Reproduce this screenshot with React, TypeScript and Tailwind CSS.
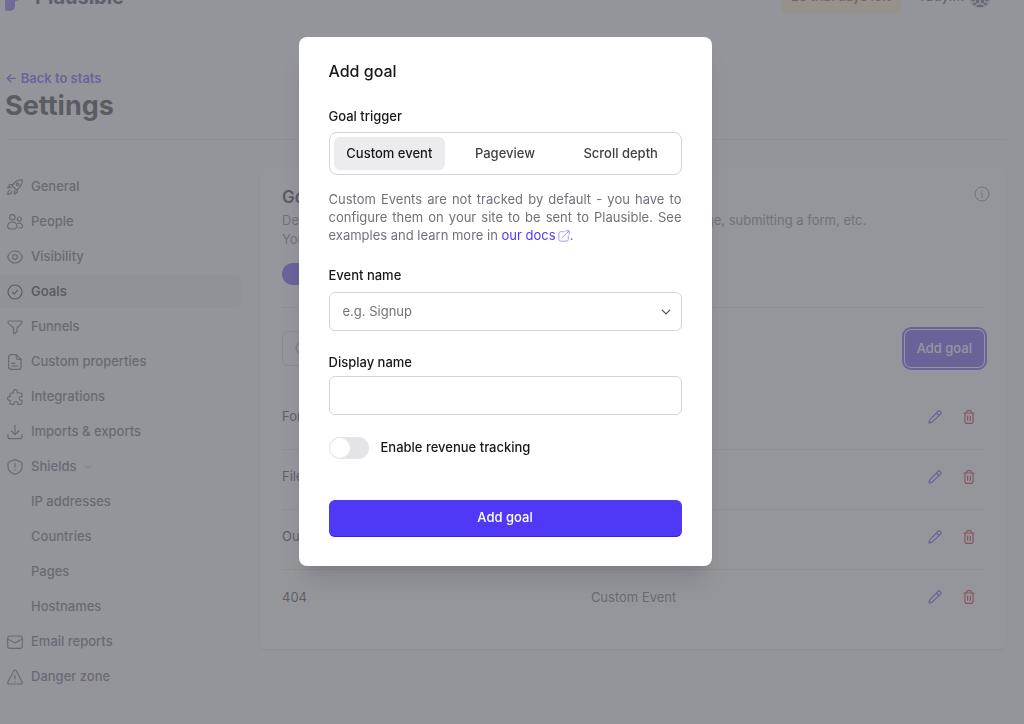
import { useState } from "react";
import type { ReactNode } from "react";

type IconName =
  | "rocket"
  | "users"
  | "eye"
  | "check"
  | "funnel"
  | "document"
  | "puzzle"
  | "download"
  | "shield"
  | "mail"
  | "warning";

const ICONS: Record<IconName, ReactNode> = {
  rocket: (
    <>
      <path d="M46 2C33 2 23 8 15 20l13 13C40 25 46 15 46 2Z" />
      <circle cx="32" cy="16" r="4" />
      <path d="M17 17 9 17 2 26l11-1M31 31v8l-9 7 1-11M10 33c-6 1-7 6-8 13 7-1 12-2 13-8" />
    </>
  ),
  users: (
    <>
      <circle cx="16" cy="10" r="8" />
      <path d="M2 38c0-9 6-14 14-14s14 5 14 14c0 4-7 7-14 7S2 42 2 38Z" />
      <circle cx="37" cy="15" r="6" />
      <path d="M33 28c8-2 14 3 14 11 0 2-4 3-11 3" />
    </>
  ),
  eye: (
    <>
      <path d="M2 24C6 12 15 6 24 6s18 6 22 18c-4 12-13 18-22 18S6 36 2 24Z" />
      <circle cx="24" cy="24" r="7" />
    </>
  ),
  check: (
    <>
      <circle cx="24" cy="24" r="21" />
      <path d="m17 25 5 5 9-11" />
    </>
  ),
  funnel: (
    <path d="M7 6h34c4 0 5 4 3 7L30 27v11l-10 7V27L4 13C2 10 3 6 7 6Z" />
  ),
  document: (
    <>
      <path d="M28 2H12c-4 0-7 3-7 7v30c0 4 3 7 7 7h23c4 0 7-3 7-7V16L28 2Z" />
      <path d="M28 2v9c0 3 2 5 5 5h9M14 28h10M14 36h18" />
    </>
  ),
  puzzle: (
    <path d="M13 12h6V8a6 6 0 0 1 12 0v4h9c3 0 5 2 5 4v7h-3a5 5 0 0 0 0 11h3v8c0 3-2 4-5 4h-8v-3a5 5 0 0 0-11 0v3h-8c-3 0-4-2-4-4v-8H7a5 5 0 0 1 0-11h2v-7c0-3 1-4 4-4Z" />
  ),
  download: (
    <>
      <path d="M24 4v27M13 21l11 11 11-11" />
      <path d="M3 32v6c0 4 2 6 6 6h30c4 0 6-2 6-6v-6" />
    </>
  ),
  shield: (
    <>
      <path d="m24 2 18 7c2 1 3 2 3 4v11c0 11-9 18-21 22C12 42 3 35 3 24V13c0-2 1-3 3-4l18-7Z" />
      <path d="M24 14v11M24 32v1" />
    </>
  ),
  mail: (
    <>
      <rect x="2" y="6" width="44" height="37" rx="7" />
      <path d="m2 15 18 10c3 1 5 1 8 0l18-10" />
    </>
  ),
  warning: (
    <>
      <path d="m20 6L3 38c-2 4 0 7 4 7h34c4 0 6-3 4-7L28 6c-2-4-6-4-8 0Z" />
      <path d="M24 19v11M24 37v1" />
    </>
  ),
};

function NavIcon({ name }: { name: IconName }) {
  return (
    <svg
      viewBox="0 0 48 48"
      className="size-4 shrink-0"
      fill="none"
      stroke="currentColor"
      strokeWidth="3.5"
      strokeLinecap="round"
      strokeLinejoin="round"
      aria-hidden="true"
    >
      {ICONS[name]}
    </svg>
  );
}

function Chevron({ className }: { className: string }) {
  return (
    <svg viewBox="0 0 8 8" className={className} fill="none" stroke="currentColor" aria-hidden="true">
      <path d="m1 2.5 3 3 3-3" strokeLinecap="round" strokeLinejoin="round" />
    </svg>
  );
}

interface NavItem {
  label: string;
  icon?: IconName;
  expandable?: boolean;
}

const NAV: NavItem[] = [
  { label: "General", icon: "rocket" },
  { label: "People", icon: "users" },
  { label: "Visibility", icon: "eye" },
  { label: "Goals", icon: "check" },
  { label: "Funnels", icon: "funnel" },
  { label: "Custom properties", icon: "document" },
  { label: "Integrations", icon: "puzzle" },
  { label: "Imports & exports", icon: "download" },
  { label: "Shields", icon: "shield", expandable: true },
  { label: "IP addresses" },
  { label: "Countries" },
  { label: "Pages" },
  { label: "Hostnames" },
  { label: "Email reports", icon: "mail" },
  { label: "Danger zone", icon: "warning" },
];

const GOALS = ["Form submissions", "File downloads", "Outbound links", "404"];

const TRIGGERS = ["Custom event", "Pageview", "Scroll depth"];

function Header() {
  return (
    <header className="-mt-5 flex h-[34px] items-center justify-between pr-3.5">
      <div className="flex items-center gap-3 text-[20px] font-bold text-slate-800">
        <svg viewBox="0 0 18 28" className="h-7 w-[18px]" aria-hidden="true">
          <defs>
            <linearGradient id="logo" x1="0" y1="0" x2="1" y2="1">
              <stop offset="0" stopColor="#818cf8" />
              <stop offset="1" stopColor="#4f39f6" />
            </linearGradient>
          </defs>
          <path d="M2 0h8a8 9 0 0 1 0 18v5a5 5 0 0 1-5 5H2a2 2 0 0 1-2-2V2a2 2 0 0 1 2-2Z" fill="url(#logo)" />
        </svg>
        Plausible
      </div>
      <div className="flex h-full items-center text-[13px] font-medium">
        <span className="flex h-full items-center rounded-md bg-amber-100 px-2.5 text-yellow-800">
          28 trial days left
        </span>
        <span className="ml-5 text-zinc-700">rudy.m</span>
        <svg viewBox="0 0 24 24" className="ml-1 size-6 text-slate-600" aria-hidden="true">
          <circle cx="12" cy="12" r="11" fill="currentColor" opacity=".25" />
          <path
            d="M5 5h4v4H5zM15 5h4v4h-4zM10 9h4v4h-4zM3 13h4v3H3zM17 13h4v3h-4zM8 15h3v3H8zM13 15h3v3h-3zM5 18h3v2H5zM16 18h3v2h-3zM9 20h6v2H9z"
            fill="currentColor"
          />
        </svg>
      </div>
    </header>
  );
}

function Sidebar() {
  return (
    <nav className="-ml-3 flex w-[249px] shrink-0 flex-col gap-0.5 pt-px text-[13px] font-medium text-zinc-600">
      {NAV.map((item) => (
        <a
          key={item.label}
          href="#"
          className={
            item.label === "Goals"
              ? "flex h-[33px] items-center gap-2 rounded-md bg-zinc-200/60 pl-3.5 font-semibold text-zinc-900"
              : "flex h-[33px] items-center gap-2 rounded-md pl-3.5"
          }
        >
          {item.icon ? <NavIcon name={item.icon} /> : <span className="w-4" />}
          {item.label}
          {item.expandable && <Chevron className="size-2 text-zinc-400" />}
        </a>
      ))}
    </nav>
  );
}

function GoalsCard() {
  return (
    <section className="h-[480px] min-w-0 flex-1 rounded-md bg-white px-[22px] shadow-sm">
      <div className="border-b border-zinc-200 pt-4 pb-[22px]">
        <div className="flex items-center justify-between">
          <h2 className="text-[17px] leading-6 font-semibold text-zinc-900">Goals</h2>
          <button type="button" aria-label="Help" className="-mt-1.5 -mr-1.5 text-zinc-500">
            <svg viewBox="0 0 16 16" className="size-4" fill="none" stroke="currentColor" aria-hidden="true">
              <circle cx="8" cy="8" r="7" />
              <path d="M7 7h1v4.5M8 4.5v.5" strokeLinecap="round" />
            </svg>
          </button>
        </div>
        <p className="mt-0.5 text-[13px] leading-[19px] text-zinc-500">
          Define actions you want your visitors to take, like visiting a certain page, submitting a form, etc.
          <br />
          You can also compose goals.
        </p>
        <button type="button" aria-label="Show goals" className="mt-3.5 block h-[22px] w-10 rounded-full bg-[#4f39f6]" />
      </div>
      <div className="mt-[22px] flex items-center justify-between">
        <div className="flex h-[35px] w-56 items-center gap-2 rounded-md border border-zinc-300 px-3 text-zinc-500">
          <svg viewBox="0 0 14 14" className="size-3.5" fill="none" stroke="currentColor" aria-hidden="true">
            <circle cx="6" cy="6" r="5" />
            <path d="m10 10 3 3" />
          </svg>
          <input aria-label="Search goals" className="min-w-0 flex-1 outline-none" />
        </div>
        <button
          type="button"
          className="h-[37px] rounded-md bg-[#4f39f6] px-3 text-[13px] font-medium text-white ring-2 ring-[#4f39f6] ring-offset-1"
        >
          Add goal
        </button>
      </div>
      <table className="mt-[22px] w-full text-[13px] text-zinc-800">
        <tbody>
          {GOALS.map((goal) => (
            <tr key={goal} className="h-[60px] border-b border-zinc-200 last:border-0">
              <td className="w-[44%] pb-1">{goal}</td>
              <td className="pb-1 text-zinc-600">Custom Event</td>
              <td className="w-20 pb-1">
                <div className="flex items-center justify-end gap-5 pr-2">
                  <button type="button" aria-label={`Edit ${goal}`} className="text-indigo-700">
                    <svg viewBox="0 0 42 42" className="size-3.5" fill="none" stroke="currentColor" strokeWidth="3.5" strokeLinejoin="round" aria-hidden="true">
                      <path d="M3 39c0-5 1-8 4-11L29 5c2-3 6-3 8 0 3 2 3 6 0 8L14 35c-3 3-6 4-11 4ZM25 9l8 8" />
                    </svg>
                  </button>
                  <button type="button" aria-label={`Delete ${goal}`} className="text-red-700">
                    <svg viewBox="0 0 42 42" className="size-3.5" fill="none" stroke="currentColor" strokeWidth="3.5" strokeLinecap="round" aria-hidden="true">
                      <path d="M6 9h30M14 9V6c0-2 1-4 4-4h6c3 0 4 2 4 4v3M9 9v26c0 3 2 5 5 5h14c3 0 5-2 5-5V9M17 18v13M25 18v13" />
                    </svg>
                  </button>
                </div>
              </td>
            </tr>
          ))}
        </tbody>
      </table>
    </section>
  );
}

function AddGoalModal() {
  const [trigger, setTrigger] = useState("Custom event");

  return (
    <div className="fixed inset-0 flex items-start justify-center bg-zinc-500/75 pt-[37px] pr-3.5">
      <form
        role="dialog"
        aria-labelledby="modal-title"
        onSubmit={(e) => e.preventDefault()}
        className="w-full max-w-[413px] rounded-lg bg-white px-[30px] pt-[22px] pb-[29px] text-[13px] text-zinc-900 shadow-xl"
      >
        <h2 id="modal-title" className="text-[16px] leading-6 font-medium">
          Add goal
        </h2>
        <div id="trigger-label" className="mt-[23px] leading-5 font-medium">
          Goal trigger
        </div>
        <div
          role="group"
          aria-labelledby="trigger-label"
          className="mt-1.5 grid grid-cols-3 gap-1 rounded-lg border border-zinc-300 p-1"
        >
          {TRIGGERS.map((t) => (
            <button
              key={t}
              type="button"
              aria-pressed={t === trigger}
              onClick={() => setTrigger(t)}
              className={
                t === trigger
                  ? "h-[33px] rounded-md bg-zinc-200/70 font-medium text-zinc-900"
                  : "h-[33px] rounded-md font-medium text-zinc-700"
              }
            >
              {t}
            </button>
          ))}
        </div>
        <p className="mt-[15px] text-justify leading-[18px] text-zinc-500">
          Custom Events are not tracked by default - you have to configure them on your site to be sent to
          Plausible. See examples and learn more in{" "}
          <a href="#" className="text-[#4f39f6]">
            our docs
            <svg viewBox="0 0 14 14" className="ml-0.5 inline size-3 opacity-60" fill="none" stroke="currentColor" strokeLinecap="round" strokeLinejoin="round" aria-hidden="true">
              <path d="M7 2H3a2 2 0 0 0-2 2v7a2 2 0 0 0 2 2h7a2 2 0 0 0 2-2V7M9 1h4v4M13 1 5 9" />
            </svg>
          </a>
          .
        </p>
        <label htmlFor="event-name" className="mt-[21px] block leading-5 font-medium">
          Event name
        </label>
        <div className="mt-[7px] flex h-[39px] items-center rounded-md border border-zinc-300 pr-2.5 pl-[13px]">
          <input
            id="event-name"
            placeholder="e.g. Signup"
            className="min-w-0 flex-1 outline-none placeholder:text-zinc-500"
          />
          <Chevron className="size-2.5 text-zinc-600" />
        </div>
        <label htmlFor="display-name" className="mt-[21px] block leading-5 font-medium">
          Display name
        </label>
        <input
          id="display-name"
          className="mt-1 block h-[39px] w-full rounded-md border border-zinc-300 px-[13px] outline-none"
        />
        <label className="mt-[22px] flex items-start gap-3 font-medium">
          <input type="checkbox" role="switch" className="peer sr-only" />
          <span className="flex h-[22px] w-10 items-center rounded-full bg-zinc-200 px-px peer-checked:justify-end peer-checked:bg-[#4f39f6]">
            <span className="size-5 rounded-full bg-white" />
          </span>
          <span className="leading-5">Enable revenue tracking</span>
        </label>
        <button
          type="submit"
          className="mt-[41px] h-[37px] w-full rounded-md border-b border-[#3a1fe6] bg-[#4f39f6] font-medium text-white"
        >
          Add goal
        </button>
      </form>
    </div>
  );
}

export default function App() {
  return (
    <div className="flow-root min-h-screen bg-zinc-50 font-['Inter',sans-serif]">
      <div className="pr-[18px] pl-[5px]">
        <Header />
        <div className="mt-[54px] border-b border-zinc-200 pb-4">
          <a href="#" className="block text-[13px] leading-5 font-semibold text-indigo-600">
            ← Back to stats
          </a>
          <h1 className="text-[27px] leading-[35px] font-bold text-zinc-900">Settings</h1>
        </div>
        <div className="mt-[29px] flex items-start gap-[18px]">
          <Sidebar />
          <GoalsCard />
        </div>
      </div>
      <AddGoalModal />
    </div>
  );
}
